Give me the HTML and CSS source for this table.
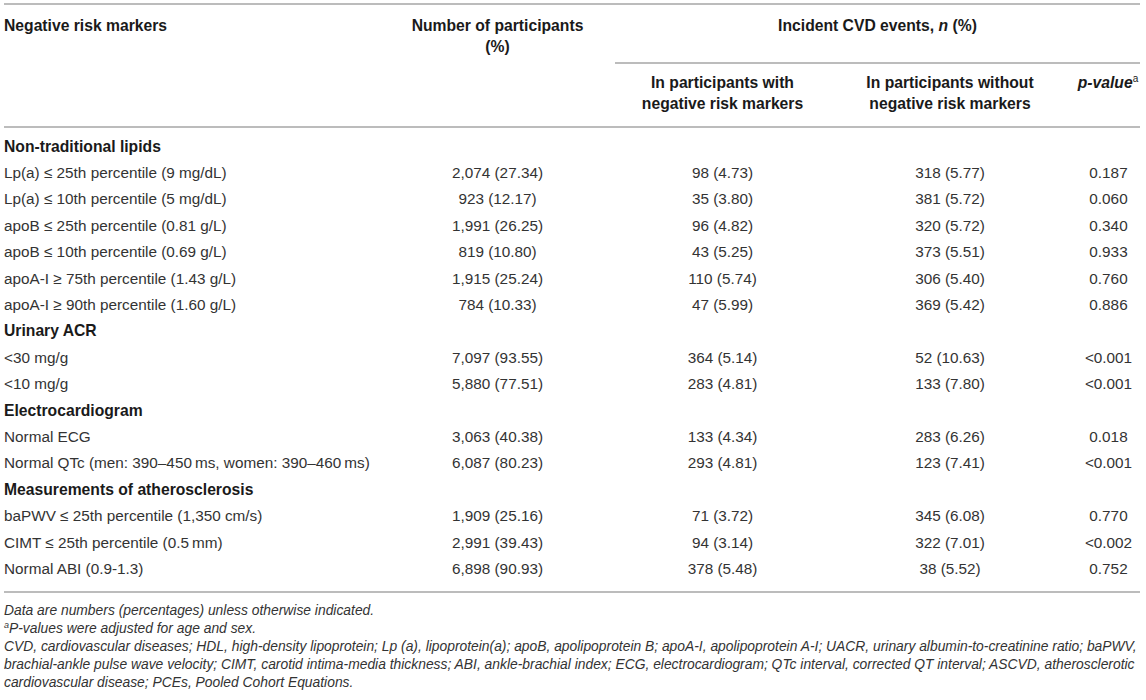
FILE: index.html
```html
<!DOCTYPE html>
<html>
<head>
<meta charset="utf-8">
<link rel="stylesheet" href="styles.css">
</head>
<body>
<div class="wrap">
<table class="tbl">
  <colgroup>
    <col class="c1"><col class="c2"><col class="c3"><col class="c4"><col class="c5">
  </colgroup>
  <thead>
    <tr class="h1">
      <th rowspan="2" class="left">Negative risk markers</th>
      <th rowspan="2">Number of participants<br>(%)</th>
      <th colspan="3" class="span">Incident CVD events, <i>n</i> (%)</th>
    </tr>
    <tr class="h2">
      <th>In participants with<br>negative risk markers</th>
      <th>In participants without<br>negative risk markers</th>
      <th class="pv"><i>p-value</i><sup>a</sup></th>
    </tr>
  </thead>
  <tbody>
    <tr class="sec first"><td colspan="5">Non-traditional lipids</td></tr>
    <tr><td>Lp(a) &le; 25th percentile (9 mg/dL)</td><td>2,074 (27.34)</td><td>98 (4.73)</td><td>318 (5.77)</td><td>0.187</td></tr>
    <tr><td>Lp(a) &le; 10th percentile (5 mg/dL)</td><td>923 (12.17)</td><td>35 (3.80)</td><td>381 (5.72)</td><td>0.060</td></tr>
    <tr><td>apoB &le; 25th percentile (0.81 g/L)</td><td>1,991 (26.25)</td><td>96 (4.82)</td><td>320 (5.72)</td><td>0.340</td></tr>
    <tr><td>apoB &le; 10th percentile (0.69 g/L)</td><td>819 (10.80)</td><td>43 (5.25)</td><td>373 (5.51)</td><td>0.933</td></tr>
    <tr><td>apoA-I &ge; 75th percentile (1.43 g/L)</td><td>1,915 (25.24)</td><td>110 (5.74)</td><td>306 (5.40)</td><td>0.760</td></tr>
    <tr><td>apoA-I &ge; 90th percentile (1.60 g/L)</td><td>784 (10.33)</td><td>47 (5.99)</td><td>369 (5.42)</td><td>0.886</td></tr>
    <tr class="sec"><td colspan="5">Urinary ACR</td></tr>
    <tr><td>&lt;30 mg/g</td><td>7,097 (93.55)</td><td>364 (5.14)</td><td>52 (10.63)</td><td>&lt;0.001</td></tr>
    <tr><td>&lt;10 mg/g</td><td>5,880 (77.51)</td><td>283 (4.81)</td><td>133 (7.80)</td><td>&lt;0.001</td></tr>
    <tr class="sec"><td colspan="5">Electrocardiogram</td></tr>
    <tr><td>Normal ECG</td><td>3,063 (40.38)</td><td>133 (4.34)</td><td>283 (6.26)</td><td>0.018</td></tr>
    <tr><td>Normal QTc (men: 390&ndash;450&#8201;ms, women: 390&ndash;460&#8201;ms)</td><td>6,087 (80.23)</td><td>293 (4.81)</td><td>123 (7.41)</td><td>&lt;0.001</td></tr>
    <tr class="sec"><td colspan="5">Measurements of atherosclerosis</td></tr>
    <tr><td>baPWV &le; 25th percentile (1,350 cm/s)</td><td>1,909 (25.16)</td><td>71 (3.72)</td><td>345 (6.08)</td><td>0.770</td></tr>
    <tr><td>CIMT &le; 25th percentile (0.5&#8201;mm)</td><td>2,991 (39.43)</td><td>94 (3.14)</td><td>322 (7.01)</td><td>&lt;0.002</td></tr>
    <tr class="last"><td>Normal ABI (0.9-1.3)</td><td>6,898 (90.93)</td><td>378 (5.48)</td><td>38 (5.52)</td><td>0.752</td></tr>
  </tbody>
</table>
<div class="notes">
  <p>Data are numbers (percentages) unless otherwise indicated.</p>
  <p><sup>a</sup>P-values were adjusted for age and sex.</p>
  <p>CVD, cardiovascular diseases; HDL, high-density lipoprotein; Lp (a), lipoprotein(a); apoB, apolipoprotein B; apoA-I, apolipoprotein A-I; UACR, urinary albumin-to-creatinine ratio; baPWV, brachial-ankle pulse wave velocity; CIMT, carotid intima-media thickness; ABI, ankle-brachial index; ECG, electrocardiogram; QTc interval, corrected QT interval; ASCVD, atherosclerotic cardiovascular disease; PCEs, Pooled Cohort Equations.</p>
</div>
</div>
</body>
</html>
```
FILE: styles.css
```css
html, body {
  margin: 0;
  padding: 0;
  background: #fff;
}
body {
  font-family: "Liberation Sans", Arial, Helvetica, sans-serif;
  color: #333;
}
.wrap {
  padding: 3px 6px 0 4px;
}
.tbl {
  width: 100%;
  border-collapse: collapse;
  border-top: 2px solid #bcbcbc;
  border-bottom: 2px solid #bcbcbc;
  font-size: 15.3px;
}
.c1 { width: 376px; }
.c2 { width: 235px; }
.c3 { width: 215px; }
.c4 { width: 240px; }
.c5 { width: auto; }
.tbl th {
  font-weight: bold;
  font-size: 15.7px;
  color: #1a1a1a;
  text-align: center;
  vertical-align: top;
  line-height: 20.5px;
  padding: 0;
}
.tbl th.left { text-align: left; }
.h1 th { padding-top: 11px; height: 46px; }
.h2 th { padding-top: 9px; padding-bottom: 12px; border-bottom: 2px solid #bcbcbc; }
.h1 th[rowspan] { border-bottom: 2px solid #bcbcbc; }
.span { border-bottom: 2px solid #bcbcbc; }
.pv { padding-left: 6px !important; }
.pv sup { font-size: 10px; font-weight: normal; vertical-align: 6px; line-height: 0; }
.pv i { font-weight: bold; }
.tbl td {
  text-align: center;
  padding: 0;
  height: 26.4px;
  line-height: 26.4px;
  white-space: nowrap;
}
.tbl td:first-child { text-align: left; }
.tbl td:last-child:not(:first-child) { padding-left: 7px; }
.tbl tr.sec td { font-weight: bold; font-size: 15.7px; color: #1a1a1a; }
.tbl tr.first td { padding-top: 5.5px; }
.tbl tr.last td { padding-bottom: 9px; }
.notes {
  font-style: italic;
  font-size: 13.85px;
  line-height: 18px;
  color: #333;
  padding-top: 8px;
  margin-right: -4px;
}
.notes p { margin: 0; }
.notes sup { font-size: 9px; vertical-align: 5px; line-height: 0; }
```
